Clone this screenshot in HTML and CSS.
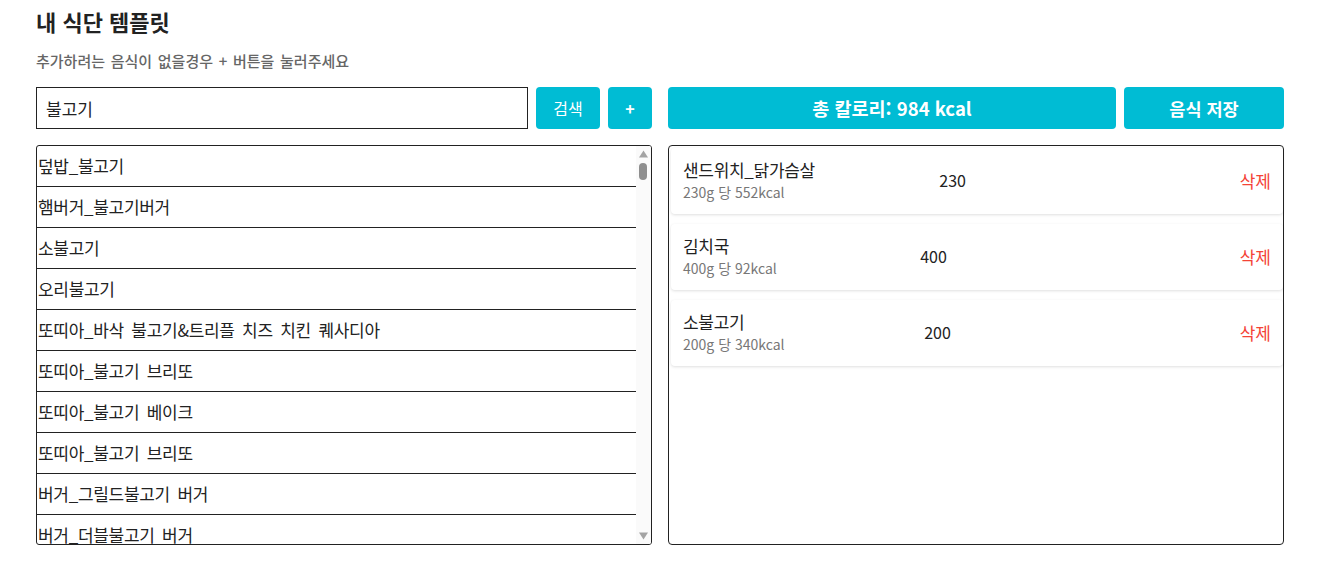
FILE: index.html
```html
<!DOCTYPE html>
<html lang="ko">
<head>
<meta charset="utf-8">
<title>내 식단 템플릿</title>
<link rel="stylesheet" href="styles.css">
</head>
<body>
<div class="page">
  <h1 class="title">내 식단 템플릿</h1>
  <p class="hint">추가하려는 음식이 없을경우 + 버튼을 눌러주세요</p>
  <div class="columns">
    <section class="col">
      <div class="toolbar">
        <input class="search" type="text" value="불고기">
        <button class="btn btn-search">검색</button>
        <button class="btn btn-add">+</button>
      </div>
      <div class="results">
        <ul class="result-list">
          <li>덮밥_불고기</li>
          <li>햄버거_불고기버거</li>
          <li>소불고기</li>
          <li>오리불고기</li>
          <li>또띠아_바삭 불고기&amp;트리플 치즈 치킨 퀘사디아</li>
          <li>또띠아_불고기 브리또</li>
          <li>또띠아_불고기 베이크</li>
          <li>또띠아_불고기 브리또</li>
          <li>버거_그릴드불고기 버거</li>
          <li>버거_더블불고기 버거</li>
          <li>버거_불고기 버거</li>
          <li>버거_불고기 베이컨 버거</li>
          <li>버거_치즈불고기 버거</li>
          <li>불고기덮밥</li>
          <li>불고기피자</li>
        </ul>
        <div class="scrollbar" aria-hidden="true">
          <svg class="arrow" width="15" height="16" viewBox="0 0 15 16"><path d="M7.5 4.5L12 11.5H3z" fill="#a3a3a3"/></svg>
          <div class="track"><div class="thumb"></div></div>
          <svg class="arrow" width="15" height="16" viewBox="0 0 15 16"><path d="M3 4.5H12L7.5 11.5z" fill="#a3a3a3"/></svg>
        </div>
      </div>
    </section>
    <section class="col">
      <div class="toolbar">
        <button class="btn btn-total">총 칼로리: 984 kcal</button>
        <button class="btn btn-save">음식 저장</button>
      </div>
      <div class="selected">
        <div class="card">
          <div class="info">
            <div class="name">샌드위치_닭가슴살</div>
            <div class="meta">230g 당 552kcal</div>
          </div>
          <span class="qty">230</span>
          <button class="del">삭제</button>
        </div>
        <div class="card">
          <div class="info">
            <div class="name">김치국</div>
            <div class="meta">400g 당 92kcal</div>
          </div>
          <span class="qty">400</span>
          <button class="del">삭제</button>
        </div>
        <div class="card">
          <div class="info">
            <div class="name">소불고기</div>
            <div class="meta">200g 당 340kcal</div>
          </div>
          <span class="qty">200</span>
          <button class="del">삭제</button>
        </div>
      </div>
    </section>
  </div>
</div>
</body>
</html>
```

FILE: styles.css
```css
* { box-sizing: border-box; }
html, body { margin: 0; padding: 0; background: #fff; }
body {
  font-family: "Noto Sans CJK KR", "Noto Sans", sans-serif;
  color: #222;
}
.page {
  width: 1248px;
  margin-left: 36px;
}
.title {
  margin: 7px 0 0;
  font-size: 22px;
  line-height: 28px;
  font-weight: 700;
  color: #222;
}
.hint {
  margin: 16px 0 0;
  font-size: 15px;
  line-height: 20px;
  font-weight: 500;
  word-spacing: 1.5px;
  color: #666;
}
.columns {
  margin-top: 16px;
  display: grid;
  grid-template-columns: 616px 616px;
  column-gap: 16px;
}
.toolbar {
  display: flex;
  gap: 8px;
  height: 42px;
}
.search {
  flex: 1;
  height: 42px;
  border: 1px solid #222;
  border-radius: 0;
  padding: 0 9px;
  font: inherit;
  font-size: 17px;
  color: #222;
  outline: none;
}
.btn {
  height: 42px;
  border: none;
  border-radius: 4px;
  background: #00bcd4;
  color: #fff;
  font-family: inherit;
  padding: 0;
  cursor: pointer;
}
.btn-search { width: 64px; font-size: 16px; }
.btn-add { width: 44px; font-size: 16px; font-weight: 700; }
.btn-total { flex: 1; font-size: 18.5px; font-weight: 700; }
.btn-save { width: 160px; font-size: 17.5px; font-weight: 700; }

.results {
  display: flex;
  margin-top: 16px;
  height: 400px;
  border: 1px solid #222;
  border-radius: 3px;
  overflow: hidden;
}
.result-list {
  flex: 1;
  list-style: none;
  margin: 0;
  padding: 0;
  overflow: hidden;
}
.result-list li {
  height: 41px;
  line-height: 40px;
  padding-left: 1px;
  border-bottom: 1px solid #222;
  font-size: 17px;
  letter-spacing: -0.3px;
  word-spacing: 3px;
  white-space: nowrap;
  color: #222;
}
.scrollbar {
  width: 15px;
  display: flex;
  flex-direction: column;
  background: #fafafa;
}
.arrow { display: block; flex: none; }
.track {
  flex: 1;
  padding-top: 1px;
}
.thumb {
  width: 8px;
  height: 17px;
  margin-left: 3px;
  border-radius: 4px;
  background: #8e8e8e;
}

.selected {
  margin-top: 16px;
  height: 400px;
  border: 1px solid #222;
  border-radius: 4px;
  padding: 1px;
}
.card {
  display: flex;
  align-items: center;
  justify-content: space-between;
  height: 66px;
  margin: 1px 0 10px 1px;
  width: 612px;
  padding: 0 12px;
  border-radius: 4px;
  background: #fff;
  box-shadow: 0 1px 3px rgba(0, 0, 0, 0.13);
}
.info { display: flex; flex-direction: column; margin-top: -2px; }
.name {
  font-size: 17px;
  line-height: 24px;
  color: #222;
  letter-spacing: -0.3px;
}
.meta {
  font-size: 14px;
  line-height: 20px;
  color: #777;
}
.qty {
  width: 176px;
  font-size: 16px;
  color: #222;
  margin-top: -2px;
}
.del {
  border: none;
  background: none;
  padding: 0;
  font-family: inherit;
  font-size: 17px;
  color: #f44336;
  cursor: pointer;
  margin-top: -2px;
}
```
